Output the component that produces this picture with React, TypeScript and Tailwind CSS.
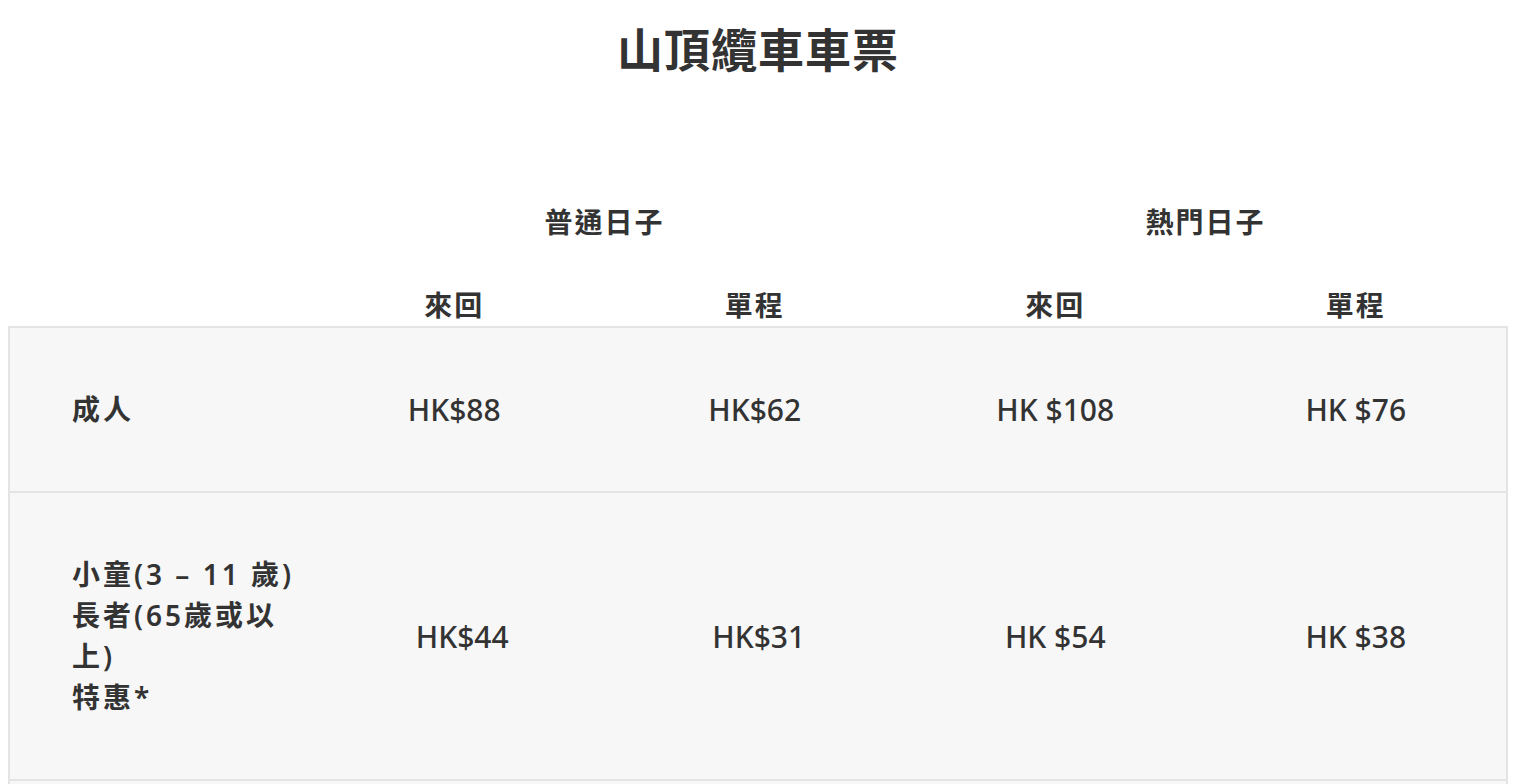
const FONT = "font-['Noto_Sans','Noto_Sans_CJK_TC',sans-serif]";

type Row = { label: string[]; prices: string[]; shift?: boolean };

const rows: Row[] = [
  { label: ["成人"], prices: ["HK$88", "HK$62", "HK $108", "HK $76"] },
  {
    label: ["小童(3 – 11 歲)", "長者(65歲或以上)", "特惠*"],
    prices: ["HK$44", "HK$31", "HK $54", "HK $38"],
    shift: true,
  },
];

export default function App() {
  return (
    <div className={`${FONT} min-h-screen bg-white text-[#333]`}>
      <div className="ml-[8px] w-[1500px] px-[2px]">
        <h1 className="pt-[19px] text-center text-[46px] leading-[60px] font-bold tracking-[1px]">
          山頂纜車車票
        </h1>
        <div className="mt-[123px] grid grid-cols-[294px_repeat(4,1fr)] text-[28px] leading-[40px] font-semibold tracking-[2px]">
          <div />
          <div className="col-span-2 text-center">普通日子</div>
          <div className="col-span-2 text-center">熱門日子</div>
        </div>
        <div className="mt-[43px] mb-[1px] grid grid-cols-[294px_repeat(4,1fr)] text-[28px] leading-[40px] font-semibold tracking-[2px]">
          <div />
          <div className="text-center">來回</div>
          <div className="text-center">單程</div>
          <div className="text-center">來回</div>
          <div className="text-center">單程</div>
        </div>
      </div>

      <div className="ml-[8px] w-[1500px] border-2 border-[#e4e4e4] bg-[#f7f7f7]">
        {rows.map((r, i) => (
          <div
            key={i}
            className={`grid grid-cols-[294px_repeat(4,1fr)] items-center py-[61px] text-[28px] leading-[41px] ${
              i > 0 ? "border-t-2 border-[#e4e4e4]" : ""
            }`}
          >
            <div className="pl-[62px] pr-[6px] font-semibold tracking-[3px]">
              {r.label.map((l, j) => (
                <div key={j}>{l}</div>
              ))}
            </div>
            {r.prices.map((p, j) => (
              <div
                key={j}
                className={`text-center text-[30px] font-medium ${
                  r.shift && j === 0 ? "pl-[16px]" : r.shift && j === 1 ? "pl-[8px]" : ""
                }`}
              >
                {p}
              </div>
            ))}
          </div>
        ))}
        <div className="h-[40px] border-t-2 border-[#e4e4e4]" />
      </div>
    </div>
  );
}
